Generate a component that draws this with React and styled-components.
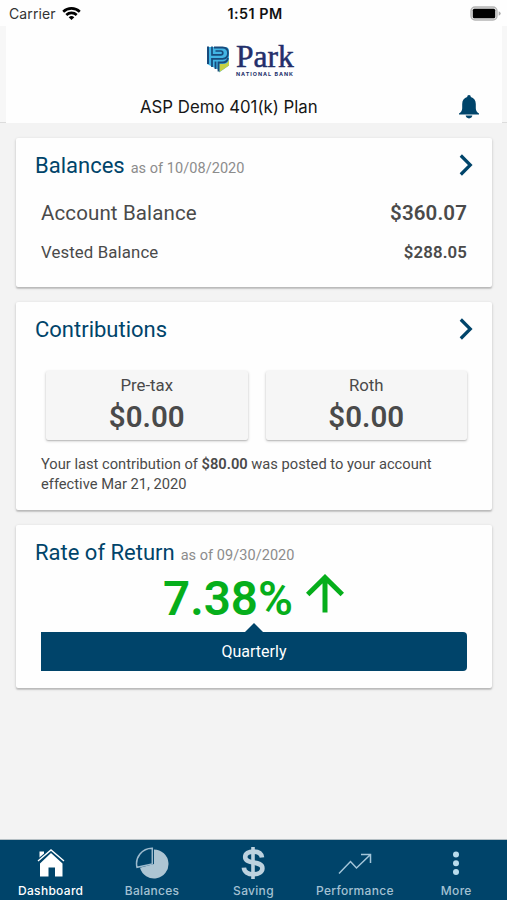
import React from 'react';
import styled, { createGlobalStyle } from 'styled-components';

const GlobalStyle = createGlobalStyle`
  * {
    box-sizing: border-box;
  }

  body {
    margin: 0;
    background: #f3f3f3;
    font-family: Roboto, sans-serif;
    color: #4a4a4a;
  }
`;

const Screen = styled.div`
  display: flex;
  flex-direction: column;
  width: 507px;
  height: 900px;
  overflow: hidden;
  background: #f3f3f3;
`;

const StatusBar = styled.div`
  display: grid;
  grid-template-columns: 1fr auto 1fr;
  align-items: center;
  height: 26px;
  padding: 0 6px 0 9px;
  background: #fefefe;
  font-family: Inter, sans-serif;
  color: #111;
`;

const Carrier = styled.div`
  display: flex;
  align-items: center;
  gap: 6px;
  font-size: 14px;
  letter-spacing: 0.1px;
  color: #333;
`;

const Clock = styled.div`
  font-size: 14.3px;
  font-weight: 600;
  letter-spacing: 0.5px;
`;

const BatterySlot = styled.div`
  display: flex;
  justify-content: flex-end;
`;

const HeaderWrap = styled.header`
  padding: 0 5px 0 6px;
  height: 97px;
  background: #f7f7f7;
  border-bottom: 1px solid #dcdcdc;
`;

const Header = styled.div`
  display: flex;
  flex-direction: column;
  height: 97px;
  background: #fefefe;
`;

const LogoRow = styled.div`
  display: flex;
  gap: 7px;
  padding: 19px 0 0 201px;
  height: 66px;
`;

const LogoText = styled.div`
  display: flex;
  flex-direction: column;
  color: #232f6b;
`;

const LogoName = styled.span`
  margin-top: -2px;
  font-family: 'Liberation Serif', serif;
  font-size: 31.5px;
  line-height: 28px;
  -webkit-text-stroke: 0.5px #232f6b;
`;

const LogoSub = styled.span`
  font-family: Inter, sans-serif;
  font-size: 5.4px;
  font-weight: 700;
  line-height: 6px;
  letter-spacing: 1px;
  white-space: nowrap;
`;

const PlanRow = styled.div`
  display: flex;
  align-items: center;
  justify-content: space-between;
  padding: 0 23px 0 134px;
  height: 30px;
`;

const PlanName = styled.h1`
  margin: 0;
  font-family: Inter, sans-serif;
  font-size: 16.8px;
  font-weight: 400;
  color: #161616;
`;

const Content = styled.main`
  flex: 1;
  display: flex;
  flex-direction: column;
  gap: 15px;
  padding: 15px 15px 0 16px;
`;

const Card = styled.section`
  height: ${props => props.$height}px;
  padding: 12px 19px 0 20px;
  background: #fefefe;
  border-radius: 2px;
  box-shadow: 0 1px 3px rgba(0, 0, 0, 0.22), 0 2px 1px rgba(0, 0, 0, 0.1);
`;

const CardHeader = styled.div`
  display: flex;
  align-items: center;
  justify-content: space-between;
  height: 30px;
`;

const CardTitle = styled.h2`
  margin: 0 0 0 -1px;
  font-size: 22px;
  font-weight: 400;
  letter-spacing: 0;
  color: #00446a;
`;

const AsOf = styled.span`
  margin-left: 6px;
  font-size: 14.5px;
  letter-spacing: 0.05px;
  color: #8c8c8c;
`;

const BalanceRow = styled.div`
  display: flex;
  align-items: center;
  justify-content: space-between;
  height: ${props => (props.$primary ? 34 : 44)}px;
  padding: 0 6px 0 5px;
  font-size: ${props => (props.$primary ? 20.5 : 16.8)}px;
  letter-spacing: 0.12px;

  strong {
    font-weight: 600;
  }
`;

const BalanceRows = styled.div`
  padding-top: 16px;
`;

const SourceRow = styled.div`
  display: grid;
  grid-template-columns: 1fr 1fr;
  gap: 18px;
  padding: 27px 6px 0 10px;
`;

const Source = styled.div`
  display: flex;
  flex-direction: column;
  align-items: center;
  height: 69px;
  padding-top: 3px;
  background: #f6f6f6;
  border-radius: 2px;
  box-shadow: 0 1px 3px rgba(0, 0, 0, 0.24), 0 1px 1px rgba(0, 0, 0, 0.1);
`;

const SourceLabel = styled.span`
  font-size: 16.8px;
  line-height: 22px;
`;

const SourceAmount = styled.span`
  font-size: 29.5px;
  font-weight: 600;
  line-height: 42px;
`;

const Note = styled.p`
  margin: 15px 0 0 5px;
  width: 420px;
  font-size: 14.7px;
  line-height: 19.5px;

  strong {
    font-weight: 600;
  }
`;

const Rate = styled.div`
  display: flex;
  align-items: center;
  gap: 13px;
  height: 65px;
  padding: 0 0 2px 127px;
  font-size: 47.5px;
  font-weight: 600;
  color: #06ae1b;

  svg {
    margin-top: -10px;
  }
`;

const Period = styled.div`
  position: relative;
  display: flex;
  align-items: center;
  justify-content: center;
  height: 39px;
  margin: 0 6px 0 5px;
  border-radius: 0 4px 4px 0;
  background: #00446a;
  font-size: 16px;
  color: #fff;

  &::before {
    content: '';
    position: absolute;
    top: -9px;
    left: 50%;
    margin-left: -9px;
    border: 9px solid transparent;
    border-top: 0;
    border-bottom-color: #00446a;
  }
`;

const TabBar = styled.nav`
  display: grid;
  grid-template-columns: repeat(5, 1fr);
  height: 61px;
  border-top: 1px solid #b5bfc4;
  background: #00446a;
`;

const Tab = styled.div`
  display: flex;
  flex-direction: column;
  align-items: center;
  padding-top: 7px;
  color: ${props => (props.$active ? '#fff' : '#a3c1d3')};

  svg {
    display: block;
  }
`;

const TabLabel = styled.span`
  margin-top: 5px;
  font-family: Inter, sans-serif;
  font-size: 12px;
  font-weight: 500;
  line-height: 14px;
  letter-spacing: 0.3px;
`;

const WifiIcon = () => (
  <svg width="19" height="15" viewBox="0 0 19 15" fill="none" stroke="#000" strokeWidth="2.6">
    <path d="M1.2 5.7a12 12 0 0 1 16.6 0" />
    <path d="M4.3 9a7.5 7.5 0 0 1 10.4 0" />
    <path d="M9.5 14 6.7 11.2a4.1 4.1 0 0 1 5.6 0z" fill="#000" stroke="none" />
  </svg>
);

const BatteryIcon = () => (
  <svg width="31" height="15" viewBox="0 0 31 15">
    <rect x="1" y="1" width="26" height="13" rx="4" fill="#e4e4e4" stroke="#b5b5b5" strokeWidth="1.4" />
    <rect x="2.8" y="2.8" width="22.4" height="9.4" rx="1.5" fill="#000" />
    <path d="M28.7 5.2q2 .8 2 2.3t-2 2.3z" fill="#aaa" />
  </svg>
);

const ParkMark = () => (
  <svg width="22" height="29" viewBox="0 0 22 29" fill="none">
    <path d="M0 2h18q4 0 4 4v14.500L12 27.500V25L0 19z" fill="#42b4e4" />
    <path d="M12.500 27V19H16q5 0 6-4.500v6z" fill="#c6d145" />
    <path d="M1 1.500V19" stroke="#174a7c" strokeWidth="2" />
    <path d="M5 1.500v8.300h8.800q2 0 2-1.900t-2-1.900H8.500" stroke="#174a7c" strokeWidth="1.700" />
    <path d="M7 2.500h8.500q5.500 0 5.500 5.500t-5.500 5.800H5V22" stroke="#174a7c" strokeWidth="1.800" />
    <path d="M21 13q-1 4.500-5.500 4.500h-4V26.500M8.500 16.500V24" stroke="#174a7c" strokeWidth="1.800" />
  </svg>
);

const BellIcon = () => (
  <svg width="20" height="24" viewBox="0 0 20 24" fill="#00446a">
    <path d="M10 0a1.8 1.8 0 0 1 1.8 1.900C15 2.700 16.800 5.300 16.800 9v4.200c0 2.200 1 4 3.200 5.300v1H0v-1c2.200-1.300 3.200-3.100 3.200-5.300V9c0-3.700 1.800-6.300 5-7.100A1.800 1.800 0 0 1 10 0z" />
    <path d="M6.700 20.600h6.600c0 1.600-1.400 2.800-3.300 2.800s-3.300-1.200-3.300-2.800z" />
  </svg>
);

const ChevronIcon = () => (
  <svg width="14" height="22" viewBox="0 0 14 22" fill="none" stroke="#00446a" strokeWidth="3.2">
    <path d="m1.800 1.500 9.500 9.500-9.500 9.500" />
  </svg>
);

const ArrowUpIcon = () => (
  <svg width="38" height="39" viewBox="0 0 38 39" fill="none" stroke="#06ae1b" strokeWidth="5">
    <path d="M19 38.500V3M1.700 20.500 19 3.500l17.300 17" />
  </svg>
);

const HomeIcon = () => (
  <svg width="28" height="32" viewBox="0 0 28 32">
    <path d="M2.500 4.500h4.500v5l-4.500 4z" fill="#fff" />
    <path d="M14 6 25.500 16.500v13H18v-9h-6.500v9H3v-13z" fill="#fff" />
    <path d="M1 14 14 3l13 11" fill="none" stroke="#00446a" strokeWidth="3.600" />
    <path d="M1 14 14 3l13 11" fill="none" stroke="#fff" strokeWidth="1.400" />
  </svg>
);

const PieIcon = () => (
  <svg width="34" height="32" viewBox="0 0 34 32">
    <path d="M19 2.500a14.500 14.500 0 1 1-14 18.300L19 17z" fill="#adc5d3" />
    <path d="M17.300 1.200V17L2 20.300A15.500 15.500 0 0 1 17.300 1.200z" fill="#00446a" stroke="#9dbbce" strokeWidth="1.500" />
  </svg>
);

const DollarIcon = () => (
  <svg width="24" height="32" viewBox="0 0 24 32" fill="none" stroke="#bdd2df" strokeWidth="4.600">
    <path d="M12 0v32" strokeWidth="3.600" />
    <path d="M21 10.500C20.500 7 17.500 4.600 12.500 4.600c-5 0-8.300 2-8.300 5.400 0 8.200 17.200 3 17.200 11.300 0 3.700-3.600 6-9 6-5.700 0-9.200-2.500-9.500-6.600" />
  </svg>
);

const TrendIcon = () => (
  <svg width="34" height="32" viewBox="0 0 34 32" fill="none" stroke="#a3c5d9" strokeWidth="1.500">
    <path d="m1 26.500 11.500-12 6 6.500L32 8M23 7.500h9.500V16" />
  </svg>
);

const MoreIcon = () => (
  <svg width="8" height="32" viewBox="0 0 8 32" fill="#b9dced">
    <circle cx="4" cy="7.500" r="3" />
    <circle cx="4" cy="16.200" r="3" />
    <circle cx="4" cy="24.900" r="3" />
  </svg>
);

const balances = [
  { label: 'Account Balance', amount: '$360.07', primary: true },
  { label: 'Vested Balance', amount: '$288.05' },
];

const sources = [
  { label: 'Pre-tax', amount: '$0.00' },
  { label: 'Roth', amount: '$0.00' },
];

const tabs = [
  { label: 'Dashboard', Icon: HomeIcon, active: true },
  { label: 'Balances', Icon: PieIcon },
  { label: 'Saving', Icon: DollarIcon },
  { label: 'Performance', Icon: TrendIcon },
  { label: 'More', Icon: MoreIcon },
];

const App = () => (
  <>
    <GlobalStyle />
    <Screen>
      <StatusBar>
        <Carrier>
          Carrier <WifiIcon />
        </Carrier>
        <Clock>1:51 PM</Clock>
        <BatterySlot>
          <BatteryIcon />
        </BatterySlot>
      </StatusBar>

      <HeaderWrap>
        <Header>
          <LogoRow>
            <ParkMark />
            <LogoText>
              <LogoName>Park</LogoName>
              <LogoSub>NATIONAL BANK</LogoSub>
            </LogoText>
          </LogoRow>
          <PlanRow>
            <PlanName>ASP Demo 401(k) Plan</PlanName>
            <BellIcon />
          </PlanRow>
        </Header>
      </HeaderWrap>

      <Content>
        <Card $height={149}>
          <CardHeader>
            <CardTitle>
              Balances<AsOf>as of 10/08/2020</AsOf>
            </CardTitle>
            <ChevronIcon />
          </CardHeader>
          <BalanceRows>
            {balances.map(row => (
              <BalanceRow key={row.label} $primary={row.primary}>
                <span>{row.label}</span>
                <strong>{row.amount}</strong>
              </BalanceRow>
            ))}
          </BalanceRows>
        </Card>

        <Card $height={208}>
          <CardHeader>
            <CardTitle>Contributions</CardTitle>
            <ChevronIcon />
          </CardHeader>
          <SourceRow>
            {sources.map(source => (
              <Source key={source.label}>
                <SourceLabel>{source.label}</SourceLabel>
                <SourceAmount>{source.amount}</SourceAmount>
              </Source>
            ))}
          </SourceRow>
          <Note>
            Your last contribution of <strong>$80.00</strong> was posted to your account effective Mar 21, 2020
          </Note>
        </Card>

        <Card $height={163}>
          <CardHeader>
            <CardTitle>
              Rate of Return<AsOf>as of 09/30/2020</AsOf>
            </CardTitle>
          </CardHeader>
          <Rate>
            7.38%
            <ArrowUpIcon />
          </Rate>
          <Period>Quarterly</Period>
        </Card>
      </Content>

      <TabBar>
        {tabs.map(({ label, Icon, active }) => (
          <Tab key={label} $active={active}>
            <Icon />
            <TabLabel>{label}</TabLabel>
          </Tab>
        ))}
      </TabBar>
    </Screen>
  </>
);

export default App;
